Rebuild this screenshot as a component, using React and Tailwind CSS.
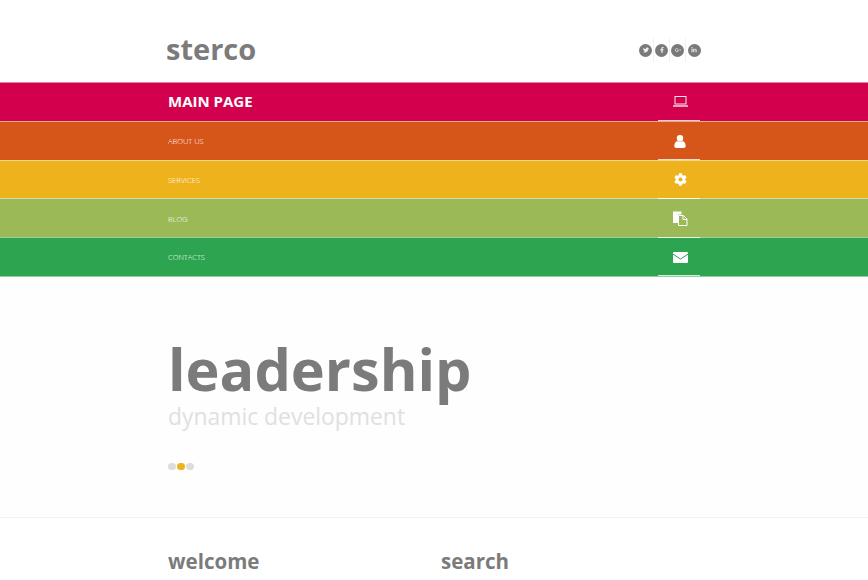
import React from "react";
import { FaTwitter, FaFacebookF, FaGooglePlusG, FaLinkedinIn, FaCog } from "react-icons/fa";

const font = { fontFamily: '"Open Sans", sans-serif' };

function Laptop() {
  return (
    <svg width="15" height="11" viewBox="0 0 15 11" fill="none" stroke="#fff" className="-mt-[2px] block">
      <rect x="2" y="0.5" width="11" height="7.500" strokeWidth="1" opacity="0.9" />
      <path d="M0 10h15" strokeWidth="1.500" opacity="0.85" />
    </svg>
  );
}
function User() {
  return (
    <svg width="12" height="13" viewBox="0 0 12 13" fill="#fff" className="block">
      <circle cx="6" cy="3.300" r="3.200" />
      <path d="M0.300 11c0-3 1.600-4.600 3-5 .8.700 4.600.700 5.400 0 1.400.4 3 2 3 5 0 1.200-.8 2-2 2H2.300c-1.200 0-2-.8-2-2z" />
    </svg>
  );
}
function Files() {
  return (
    <svg width="15" height="15" viewBox="0 0 15 15" className="block">
      <path d="M0 0.500h8.500v3H5v8.500H0z" fill="#fff" />
      <path d="M5.500 4.500h5l3.500 3.500v6.500H5.500z" fill="#9cb957" stroke="#fff" />
      <path d="M10 4.500v4h4" fill="none" stroke="#fff" />
    </svg>
  );
}
function Mail() {
  return (
    <svg width="15" height="11" viewBox="0 0 15 11" className="block">
      <rect width="15" height="11" rx="1" fill="#fff" />
      <path d="M0 2.200l7.500 4.800 7.500-4.800" fill="none" stroke="#2ca450" strokeWidth="1" />
    </svg>
  );
}

function Social({ icon, sep }) {
  return (
    <div className={`flex h-[24px] w-[16.500px] items-center justify-center ${sep ? "border-r border-[#f2f2f2]" : ""}`}>
      <span className="flex h-[13px] w-[13px] items-center justify-center rounded-full bg-[#7a7a7a] text-[6px] text-[#eeeeee]">
        {icon}
      </span>
    </div>
  );
}

const rows = [
  { label: "ABOUT US", bg: "bg-[#d65518]", icon: <User /> },
  { label: "SERVICES", bg: "bg-[#eeb31c]", icon: <FaCog className="block text-[13px] text-white" /> },
  { label: "BLOG", bg: "bg-[#9cb957]", icon: <Files /> },
  { label: "CONTACTS", bg: "bg-[#2ca450]", icon: <Mail /> },
];

function Row({ label, bg, icon, main }) {
  return (
    <div className={`h-[38.800px] border-t border-white/50 ${bg}`}>
      <div className="mx-auto flex h-full w-[532px] items-center justify-between">
        <span className={main ? "text-[15px] font-bold leading-none text-white" : "pt-[2px] text-[7.500px] font-light leading-none text-white"}>
          {label}
        </span>
        <div className="relative z-10 flex h-[calc(100%+1px)] w-[42px] items-center justify-center border-b border-white/80 pl-[2px] pt-[2px]">
          {icon}
        </div>
      </div>
    </div>
  );
}

export default function App() {
  return (
    <div style={font} className="h-[580px] w-[868px] overflow-hidden bg-white">
      <header className="mx-auto flex h-[82px] w-[536px] items-center justify-between pt-[18px]">
        <span className="pb-[4px] text-[29px] font-bold leading-none text-[#7b7b7b]">sterco</span>
        <div className="flex w-[64px] items-center">
          <Social sep icon={<FaTwitter />} />
          <Social sep icon={<FaFacebookF />} />
          <Social sep icon={<FaGooglePlusG />} />
          <Social icon={<FaLinkedinIn />} />
        </div>
      </header>
      <nav>
        <Row main label="MAIN PAGE" bg="bg-[#d3004e]" icon={<Laptop />} />
        {rows.map((r) => (
          <Row key={r.label} {...r} />
        ))}
        <div className="h-px bg-[#8fcda3]" />
      </nav>
      <section className="h-[241px] border-b border-[#f0f0f0] bg-[#fefefe]">
        <div className="mx-auto w-[532px] pt-[57px]">
          <h1 className="text-[57.600px] font-bold leading-[70px] text-[#7b7b7b]">leadership</h1>
          <p className="text-[22.900px] leading-[26px] text-[#e0e0e0]">dynamic development</p>
          <div className="mt-[33px] flex gap-[1.500px]">
            <span className="h-[7.500px] w-[7.500px] rounded-full bg-[#dddddd]" />
            <span className="h-[7.500px] w-[7.500px] rounded-full bg-[#eeb31c]" />
            <span className="h-[7.500px] w-[7.500px] rounded-full bg-[#dddddd]" />
          </div>
        </div>
      </section>
      <section className="mx-auto flex w-[532px] pt-[29px]">
        <h2 className="w-[273px] text-[20.500px] font-bold leading-[28px] text-[#7b7b7b]">welcome</h2>
        <h2 className="text-[20.500px] font-bold leading-[28px] text-[#7b7b7b]">search</h2>
      </section>
    </div>
  );
}
